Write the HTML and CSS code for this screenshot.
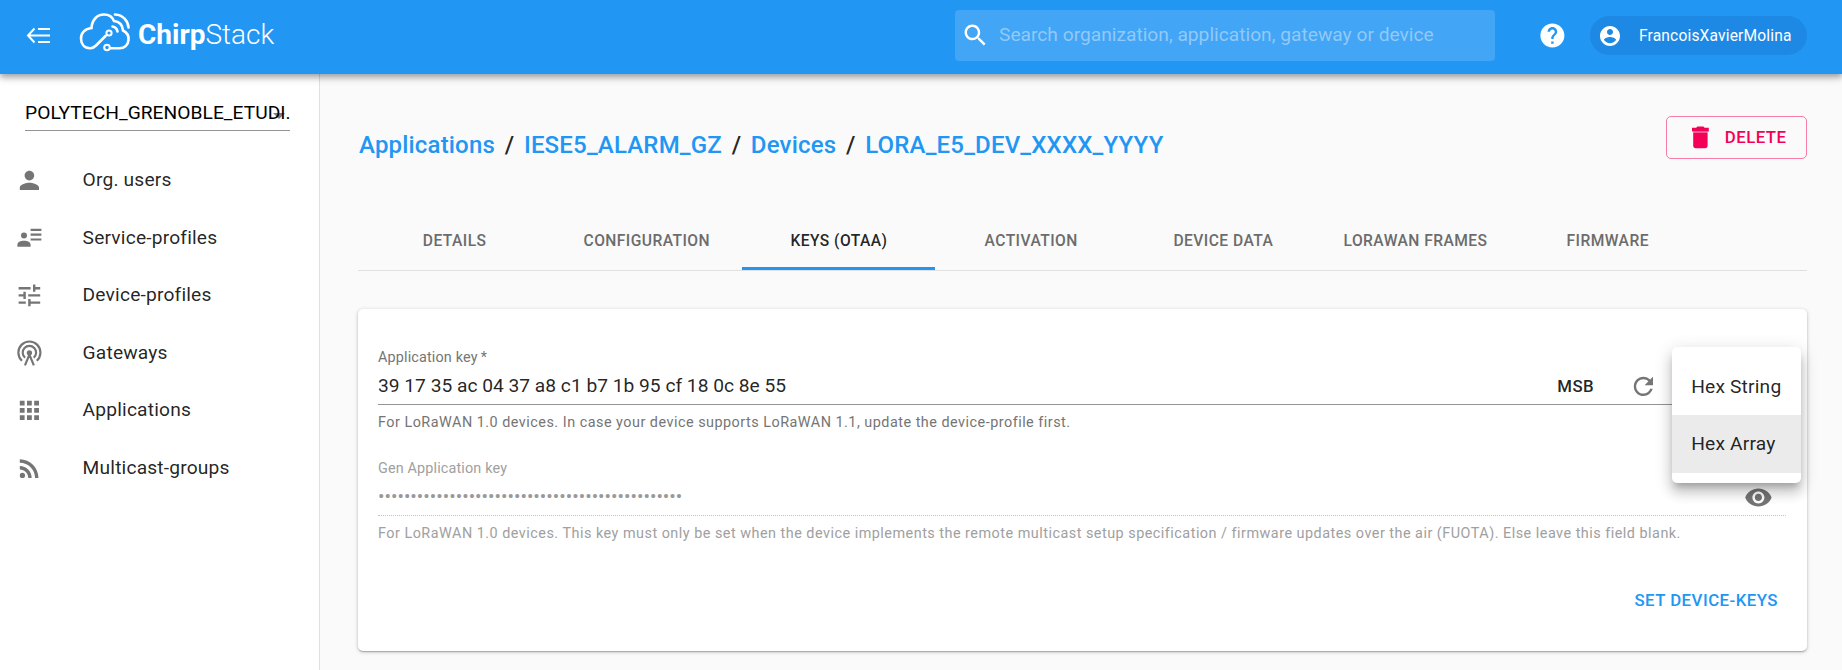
FILE: index.html
```html
<!DOCTYPE html>
<html lang="en">
<head>
<meta charset="utf-8">
<title>ChirpStack Application Server</title>
<link rel="stylesheet" href="styles.css">
</head>
<body>
<header class="appbar">
  <svg class="icon menu-icon" viewBox="0 0 28 20" fill="none" stroke="#fff" stroke-width="2"><path d="M12 3h12M2 9.500h22M12 16h12M8.500 2.500L2 9.500l6.500 7"/></svg>
  <div class="brand">
    <svg class="brand-cloud" viewBox="0 0 54 44" fill="none" stroke="#fff" stroke-width="2.6" stroke-linecap="round">
      <path d="M26.500 25L17 34.500Q14 37.500 11 37.300C5.500 37 2 33 2 27.500c0-5.500 4-9.800 10.500-10.500C13 9 18 3.500 25 3.500c5 0 8.500 2.500 10 6.500 5 .500 8.500 4 9 9.500 4 2 6 5 5.500 9.500-.500 5-4 8.300-9 8.300H31"/>
      <circle cx="30" cy="22" r="2.600" stroke-width="2"/><circle cx="28" cy="36.500" r="2.800" stroke-width="2"/>
      <path d="M33.500 15.500c3 .500 4.500 2 5 5M36 3.500c8 .500 13 6 13.500 13"/>
    </svg>
    <span class="brand-name"><b>Chirp</b><span class="light">Stack</span></span>
  </div>
  <div class="search">
    <svg class="icon search-icon" viewBox="0 0 24 24"><path d="M15.500 14h-.79l-.28-.27C15.410 12.590 16 11.110 16 9.500 16 5.910 13.090 3 9.500 3S3 5.910 3 9.500 5.910 16 9.500 16c1.610 0 3.090-.59 4.230-1.570l.27.28v.79l5 4.990L20.490 19l-4.990-5zm-6 0C7.010 14 5 11.990 5 9.500S7.010 5 9.500 5 14 7.010 14 9.500 11.990 14 9.500 14z"/></svg>
    <span class="search-text">Search organization, application, gateway or device</span>
  </div>
  <svg class="icon help-icon" viewBox="0 0 24 24"><path d="M12 2C6.480 2 2 6.480 2 12s4.480 10 10 10 10-4.480 10-10S17.520 2 12 2zm1 17h-2v-2h2v2zm2.070-7.750l-.9.920C13.450 12.900 13 13.500 13 15h-2v-.5c0-1.100.450-2.100 1.170-2.830l1.240-1.260c.370-.360.590-.860.590-1.410 0-1.100-.900-2-2-2s-2 .900-2 2H8c0-2.210 1.790-4 4-4s4 1.790 4 4c0 .880-.360 1.680-.930 2.250z"/></svg>
  <div class="user-chip">
    <svg class="icon" viewBox="0 0 24 24"><path d="M12 2C6.480 2 2 6.480 2 12s4.480 10 10 10 10-4.480 10-10S17.520 2 12 2zm0 3c1.660 0 3 1.340 3 3s-1.340 3-3 3-3-1.340-3-3 1.340-3 3-3zm0 14.200c-2.500 0-4.710-1.280-6-3.220.030-1.990 4-3.080 6-3.080 1.990 0 5.970 1.090 6 3.080-1.290 1.940-3.500 3.220-6 3.220z"/></svg>
    <span>FrancoisXavierMolina</span>
  </div>
</header>
<div class="layout">
  <nav class="drawer">
    <div class="org-select"><span>POLYTECH_GRENOBLE_ETUDI.</span><i class="caret"></i></div>
    <ul class="nav">
      <li><svg class="icon" viewBox="0 0 24 24"><path d="M12 12c2.210 0 4-1.790 4-4s-1.790-4-4-4-4 1.790-4 4 1.790 4 4 4zm0 2c-2.670 0-8 1.340-8 4v2h16v-2c0-2.660-5.330-4-8-4z"/></svg>Org. users</li>
      <li><svg class="icon" viewBox="0 0 24 24"><path d="M13 4h9v1.800h-9zM13 8h9v1.800h-9zM13 12h9v1.800h-9zM7.500 7A2.500 2.500 0 0 1 10 9.500 2.500 2.500 0 0 1 7.500 12 2.500 2.500 0 0 1 5 9.500 2.500 2.500 0 0 1 7.500 7M13 17.200V19H2v-1.800c0-2 2.500-3.200 5.500-3.200s5.500 1.200 5.500 3.200z"/></svg>Service-profiles</li>
      <li><svg class="icon" viewBox="0 0 24 24"><path d="M3 17v2h6v-2H3zM3 5v2h10V5H3zm10 16v-2h8v-2h-8v-2h-2v6h2zM7 9v2H3v2h4v2h2V9H7zm14 4v-2H11v2h10zm-6-4h2V7h4V5h-4V3h-2v6z"/></svg>Device-profiles</li>
      <li><svg class="icon" viewBox="0 0 24 24"><g fill="none" stroke="#757575" stroke-width="1.800"><path d="M5.800 18.100A9.200 9.200 0 1 1 18.200 18.100M8.400 15.600A5.600 5.600 0 1 1 15.600 15.600M8.300 22l3.700-9 3.700 9"/></g><circle cx="12" cy="11.500" r="2.200"/></svg>Gateways</li>
      <li><svg class="icon" viewBox="0 0 24 24"><path d="M4 8h4V4H4v4zm6 12h4v-4h-4v4zm-6 0h4v-4H4v4zm0-6h4v-4H4v4zm6 0h4v-4h-4v4zm6-10v4h4V4h-4zm-6 4h4V4h-4v4zm6 6h4v-4h-4v4zm0 6h4v-4h-4v4z"/></svg>Applications</li>
      <li><svg class="icon" viewBox="0 0 24 24"><circle cx="6.180" cy="17.820" r="2.180"/><path d="M4 4.440v2.830c7.030 0 12.730 5.700 12.730 12.730h2.830c0-8.590-6.970-15.560-15.560-15.560zm0 5.660v2.830c3.900 0 7.070 3.170 7.070 7.070h2.830c0-5.470-4.430-9.900-9.900-9.900z"/></svg>Multicast-groups</li>
    </ul>
  </nav>
  <main class="content">
    <div class="titlebar">
      <h1 class="crumbs"><a>Applications</a><span>/</span><a>IESE5_ALARM_GZ</a><span>/</span><a>Devices</a><span>/</span><a>LORA_E5_DEV_XXXX_YYYY</a></h1>
      <button class="delete"><svg class="icon" viewBox="0 0 24 24"><path d="M6 19c0 1.100.900 2 2 2h8c1.100 0 2-.9 2-2V8H6z"/><path d="M6 7h12v1H6z" opacity=".45"/><path d="M19 4h-3.500l-1-1h-5l-1 1H5v3h14V4z"/></svg>DELETE</button>
    </div>
    <div class="tabs">
      <div class="tab">DETAILS</div><div class="tab">CONFIGURATION</div><div class="tab active">KEYS (OTAA)</div><div class="tab">ACTIVATION</div><div class="tab">DEVICE DATA</div><div class="tab">LORAWAN FRAMES</div><div class="tab">FIRMWARE</div>
    </div>
    <section class="card">
      <div class="field">
        <label>Application key&thinsp;*</label>
        <div class="input">
          <span class="value">39 17 35 ac 04 37 a8 c1 b7 1b 95 cf 18 0c 8e 55</span>
          <span class="msb">MSB</span>
          <svg class="icon refresh" viewBox="0 0 24 24"><path d="M17.650 6.350C16.200 4.900 14.210 4 12 4c-4.420 0-7.990 3.580-7.990 8s3.570 8 7.990 8c3.730 0 6.840-2.550 7.730-6h-2.080c-.820 2.330-3.040 4-5.650 4-3.310 0-6-2.690-6-6s2.690-6 6-6c1.660 0 3.140.690 4.220 1.780L13 11h7V4l-2.350 2.350z"/></svg>
        </div>
        <p class="helper">For LoRaWAN 1.0 devices. In case your device supports LoRaWAN 1.1, update the device-profile first.</p>
      </div>
      <div class="field disabled">
        <label>Gen Application key</label>
        <div class="input">
          <span class="value dots">•••••••••••••••••••••••••••••••••••••••••••••••</span>
          <svg class="icon eye" viewBox="0 0 24 24"><path d="M12 4.500C7 4.500 2.730 7.610 1 12c1.730 4.390 6 7.500 11 7.500s9.270-3.110 11-7.500c-1.730-4.390-6-7.500-11-7.500zM12 17c-2.760 0-5-2.240-5-5s2.240-5 5-5 5 2.240 5 5-2.240 5-5 5zm0-8c-1.660 0-3 1.340-3 3s1.340 3 3 3 3-1.340 3-3-1.340-3-3-3z"/></svg>
        </div>
        <p class="helper">For LoRaWAN 1.0 devices. This key must only be set when the device implements the remote multicast setup specification / firmware updates over the air (FUOTA). Else leave this field blank.</p>
      </div>
      <button class="submit">SET DEVICE-KEYS</button>
      <div class="menu"><div>Hex String</div><div class="selected">Hex Array</div></div>
    </section>
  </main>
</div>
</body>
</html>
```

FILE: styles.css
```css
* { box-sizing: border-box; }
body { margin: 0; height: 670px; overflow: hidden; display: flex; flex-direction: column; background: #fafafa; color: rgba(0,0,0,.87); font: 19.2px/28.8px Roboto, sans-serif; }
.icon { width: 28.8px; height: 28.8px; flex: none; fill: #757575; display: block; }
.appbar { position: relative; z-index: 2; height: 74px; flex: none; display: flex; align-items: center; padding: 0 35px 3px 26px; background: #2196f3; color: #fff; box-shadow: 0 2px 5px rgba(0,0,0,.2), 0 5px 6px rgba(0,0,0,.14), 0 1px 12px rgba(0,0,0,.12); }
.appbar .icon { fill: #fff; }
.appbar .menu-icon { fill: none; width: 28px; height: 20px; }
.brand { display: flex; align-items: center; margin-left: 25px; width: 220px; }
.brand-cloud { width: 54px; height: 44px; flex: none; margin-top: -5px; }
.brand-name { margin-left: 5px; font-size: 28px; white-space: nowrap; }
.brand-name b { font-weight: 700; }
.light { font-weight: 300; }
.search { display: flex; align-items: center; margin-left: auto; width: 540px; height: 51px; padding-left: 6px; border-radius: 4px; background: #42a5f5; }
.search-text { margin-left: 9px; color: #91c9f9; }
.appbar .help-icon { margin: 0 23px 0 43px; }
.user-chip { display: flex; align-items: center; width: 217px; height: 39px; padding-left: 8px; border-radius: 20px; background: #1e88e5; font-size: 15.6px; letter-spacing: .15px; }
.user-chip .icon { width: 24px; height: 24px; }
.user-chip span { margin-left: 17px; padding-top: 1px; }
.layout { display: flex; flex: 1; }
.drawer { width: 320px; flex: none; background: #fff; border-right: 1px solid #e0e0e0; padding-top: 20px; }
.org-select { position: relative; margin: 0 29px 0 25px; height: 37px; padding-top: 5px; border-bottom: 1px solid #949494; white-space: nowrap; color: #000; letter-spacing: .04px; }
.caret { position: absolute; right: 5px; top: 19px; border: 6px solid transparent; border-top-color: rgba(0,0,0,.5); border-bottom: 0; }
.nav { list-style: none; margin: 20.600px 0 0; padding: 0; }
.nav li { display: flex; align-items: center; height: 57.6px; padding-left: 15px; gap: 38.8px; letter-spacing: .18px; }
.content { flex: 1; padding: 36px 35px 0 38px; min-width: 0; }
.titlebar { display: flex; justify-content: space-between; height: 90px; padding-top: 6px; }
.crumbs { margin: 14px 0 0 1px; display: flex; gap: 9.7px; height: 30px; font-size: 24px; line-height: 30px; font-weight: 500; letter-spacing: .18px; }
.crumbs a { color: #2196f3; }
button { font: 500 16.8px/29.4px Roboto, sans-serif; letter-spacing: .48px; background: none; padding: 0; }
.delete { display: flex; align-items: center; width: 141px; height: 43px; padding-left: 19px; gap: 10px; border: 1px solid rgba(245,0,87,.5); border-radius: 5px; color: #f50057; }
.delete .icon { fill: #f50057; }
.tabs { display: flex; height: 71px; border-bottom: 1px solid #e0e0e0; }
.tab { width: 192.200px; height: 70px; padding: 13px 0 0 1px; display: flex; align-items: center; justify-content: center; font-size: 15.6px; font-weight: 500; letter-spacing: .446px; color: #6c6c6c; }
.tab.active { color: rgba(0,0,0,.87); border-bottom: 3px solid #2196f3; padding-top: 16px; }
.card { position: relative; margin-top: 38px; height: 342px; padding: 38px 21px 0 20px; background: #fff; border-radius: 5px; box-shadow: 0 1px 4px rgba(0,0,0,.2), 0 1px 2px rgba(0,0,0,.14), 0 2px 1px -1px rgba(0,0,0,.12); }
.field { height: 111px; }
.field label { display: block; height: 20px; line-height: 21px; font-size: 14.4px; letter-spacing: .15px; color: #757575; }
.input { height: 38px; display: flex; align-items: center; padding-top: 2px; border-bottom: 1px solid #949494; }
.value { flex: 1; }
.msb { font-size: 16.8px; font-weight: 500; letter-spacing: .48px; }
.refresh { margin: 0 128px 0 35px; }
.helper { margin: 8px 0 0; font-size: 14.4px; line-height: 20px; letter-spacing: .492px; color: #757575; white-space: nowrap; }
.disabled label, .disabled .helper { color: #a0a0a0; }
.disabled .input { border-bottom: 1px dotted #c4c4c4; }
.dots { color: #999; }
.eye { margin-right: 13px; }
.submit { display: block; border: 0; margin: 17px 8px 0 auto; color: #2196f3; }
.menu { position: absolute; right: 6px; top: 38px; width: 129px; height: 136px; padding: 10.500px 0; background: #fff; border-radius: 5px; box-shadow: 0 6px 6px -3px rgba(0,0,0,.2), 0 10px 12px 1px rgba(0,0,0,.14), 0 4px 17px 2px rgba(0,0,0,.12); letter-spacing: .18px; }
.menu div { height: 57.600px; padding: 15px 19.200px 13.800px; }
.menu .selected { background: #ebebeb; }
```
